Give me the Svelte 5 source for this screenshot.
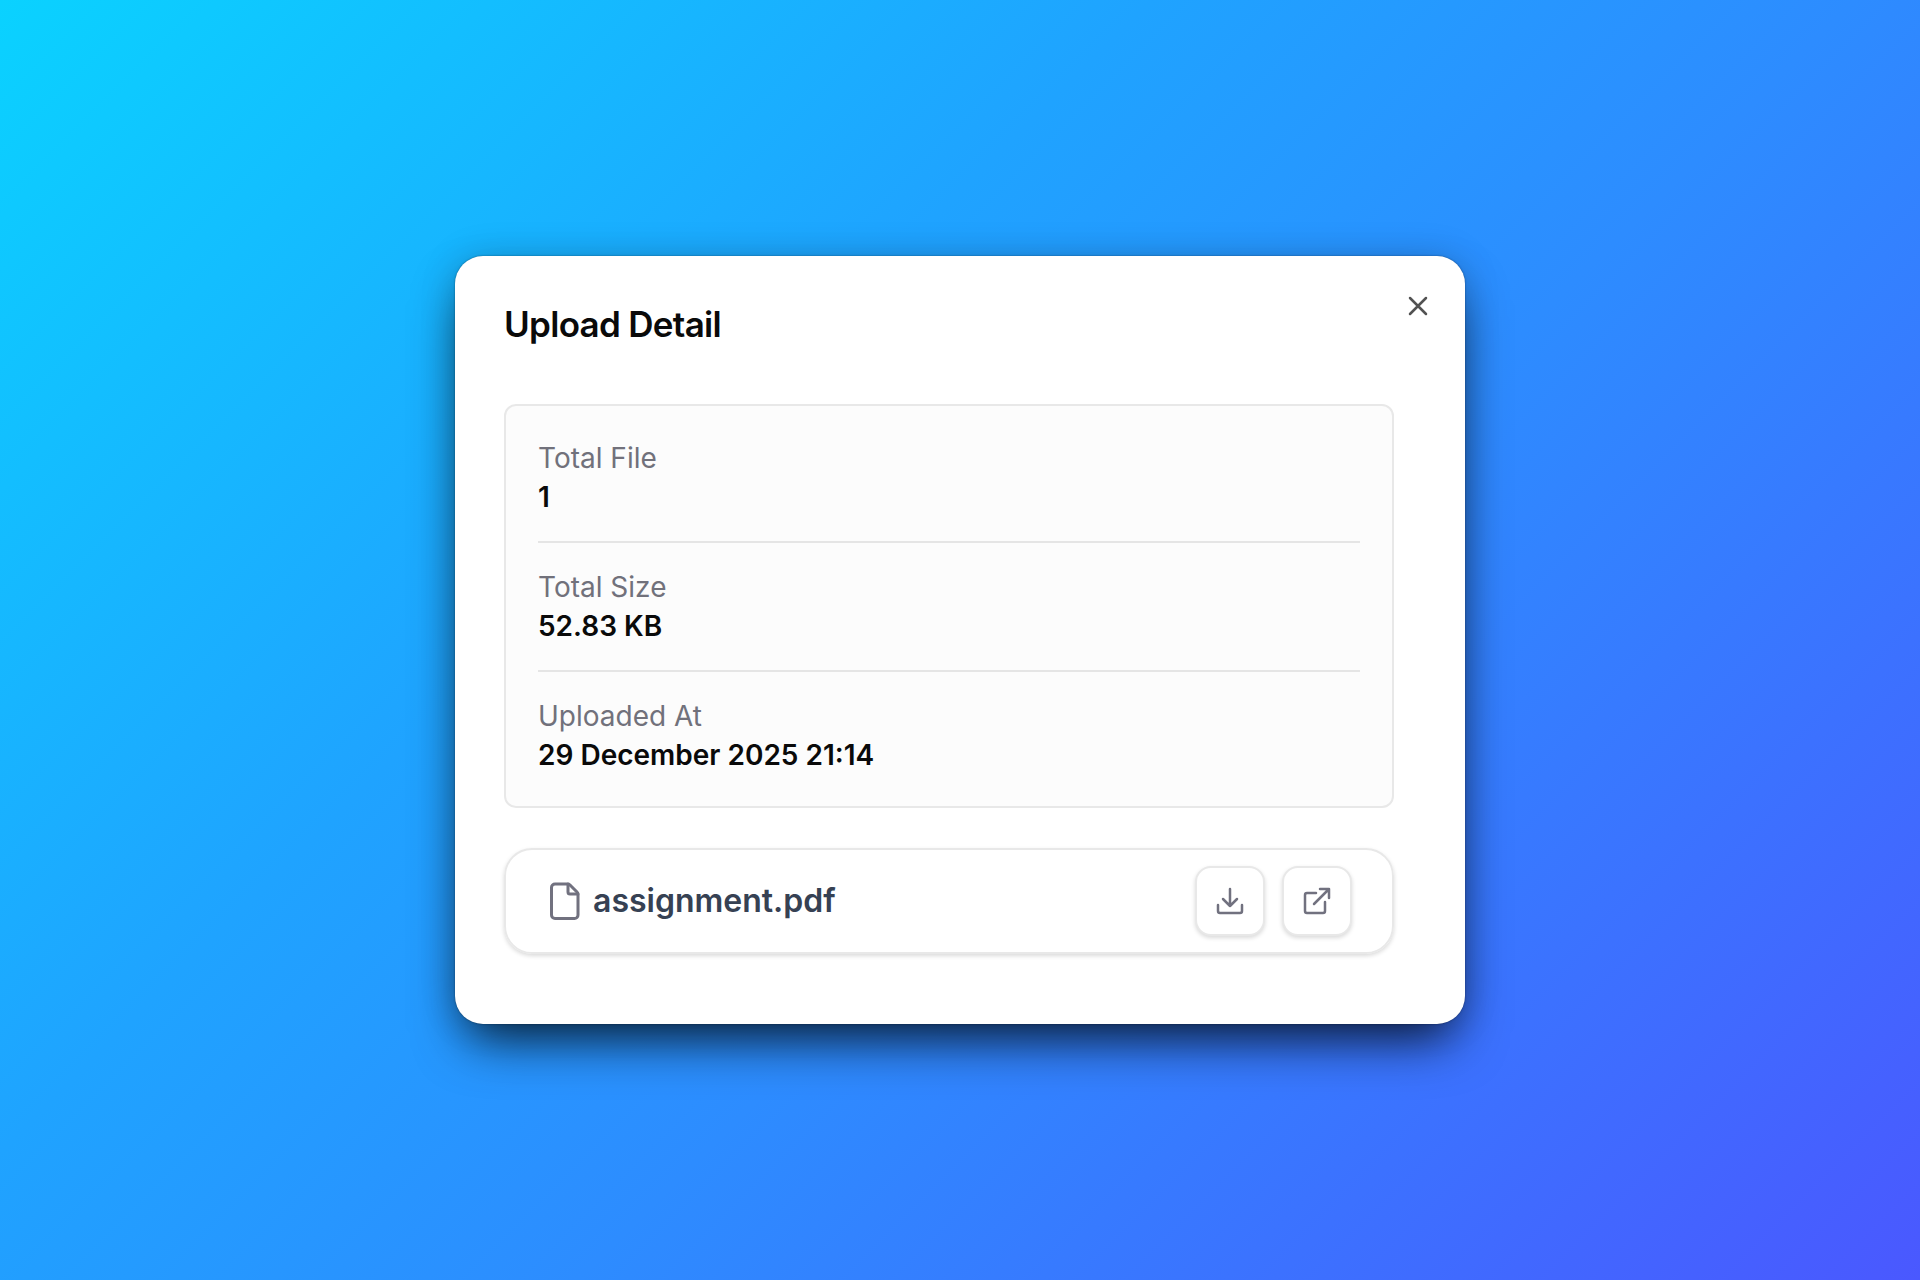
<script>
  let open = $state(true);

  const details = [
    { label: "Total File", value: "1" },
    { label: "Total Size", value: "52.83 KB" },
    { label: "Uploaded At", value: "29 December 2025 21:14" },
  ];

  const files = [{ name: "assignment.pdf", url: "#assignment.pdf" }];
</script>

<main class="backdrop">
  {#if open}
    <div class="dialog" role="dialog" aria-labelledby="dialog-title">
      <button class="close" aria-label="Close" onclick={() => (open = false)}>
        <svg viewBox="0 0 22 22">
          <path d="M3 3l16 16M19 3L3 19" />
        </svg>
      </button>

      <h2 id="dialog-title">Upload Detail</h2>

      <dl class="details">
        {#each details as item}
          <div class="detail">
            <dt>{item.label}</dt>
            <dd>{item.value}</dd>
          </div>
        {/each}
      </dl>

      {#each files as file}
        <div class="file">
          <svg class="file-icon" viewBox="0 0 32 40">
            <path d="M6 3h12.500q1.500 0 2.500 1l7 7q1 1 1 2.500V34a3.500 3.500 0 0 1-3.500 3.500H6A3.500 3.500 0 0 1 2.500 34V6.500A3.500 3.500 0 0 1 6 3z" />
            <path d="M19 3v8a2 2 0 0 0 2 2h8" />
          </svg>
          <span class="name">{file.name}</span>
          <div class="actions">
            <a href={file.url} download={file.name} aria-label="Download {file.name}">
              <svg viewBox="0 0 28 28">
                <path d="M14 2v17M7 12l7 7 7-7" />
                <path d="M2 18v6a2 2 0 0 0 2 2h20a2 2 0 0 0 2-2v-6" />
              </svg>
            </a>
            <a href={file.url} target="_blank" aria-label="Open {file.name}">
              <svg viewBox="0 0 28 28">
                <path d="M13 6H4a2 2 0 0 0-2 2v16a2 2 0 0 0 2 2h16a2 2 0 0 0 2-2v-9" />
                <path d="M11 17L26 2M17 2h9v9" />
              </svg>
            </a>
          </div>
        </div>
      {/each}
    </div>
  {/if}
</main>

<style>
  :global(body) {
    margin: 0;
  }

  .backdrop {
    display: flex;
    align-items: center;
    justify-content: center;
    min-height: 100vh;
    box-sizing: border-box;
    padding: 32px;
    background: linear-gradient(135deg, #0ad2ff 0%, #1fa3ff 36%, #2d8cff 58%, #4a58ff 100%);
    font-family: Inter, "Liberation Sans", sans-serif;
    color: #0a0a0a;
  }

  .dialog {
    position: relative;
    box-sizing: border-box;
    width: 100%;
    max-width: 1010px;
    padding: 44px 71px 70px 49px;
    border-radius: 28px;
    background: #fff;
    box-shadow:
      0 0 2px rgba(0, 0, 0, 0.45),
      0 0 36px rgba(0, 0, 0, 0.15),
      0 26px 52px -12px rgba(0, 0, 0, 0.8);
  }

  .close {
    position: absolute;
    top: 34px;
    right: 31px;
    display: flex;
    padding: 5px;
    border: 0;
    background: none;
    cursor: pointer;
  }

  .close svg {
    width: 22px;
    height: 22px;
    stroke: #525252;
  }

  svg {
    fill: none;
    stroke: #71717f;
    stroke-width: 2.5;
    stroke-linecap: round;
    stroke-linejoin: round;
  }

  h2 {
    margin: 0 0 56px;
    font-size: 35px;
    font-weight: 600;
    line-height: 48px;
    letter-spacing: -0.02em;
  }

  .details {
    margin: 0 0 40px;
    padding: 33px 32px 31px;
    border: 2px solid #e8e8e8;
    border-radius: 12px;
    background: #fcfcfc;
    font-size: 28px;
    line-height: 39px;
  }

  .detail + .detail {
    margin-top: 24px;
    padding-top: 25px;
    border-top: 2px solid #e5e5e5;
  }

  dt {
    color: #71717b;
  }

  dd {
    margin: 0;
    font-weight: 600;
  }

  .file {
    display: flex;
    align-items: center;
    gap: 12px;
    padding: 16px 40px 16px 43px;
    border: 2px solid #e8e8e8;
    border-radius: 28px;
    box-shadow: 0 2px 4px rgba(0, 0, 0, 0.15);
  }

  .file-icon {
    width: 32px;
    height: 40px;
    stroke-width: 3;
  }

  .name {
    flex: 1;
    color: #364153;
    font-size: 32px;
    font-weight: 600;
    line-height: 48px;
  }

  .actions {
    display: flex;
    gap: 17px;
  }

  .actions a {
    display: flex;
    align-items: center;
    justify-content: center;
    width: 66px;
    height: 66px;
    border: 2px solid #e8e8e8;
    border-radius: 16px;
    background: #fff;
    box-shadow: 0 2px 4px rgba(0, 0, 0, 0.15);
  }

  .actions svg {
    width: 28px;
    height: 28px;
  }
</style>
